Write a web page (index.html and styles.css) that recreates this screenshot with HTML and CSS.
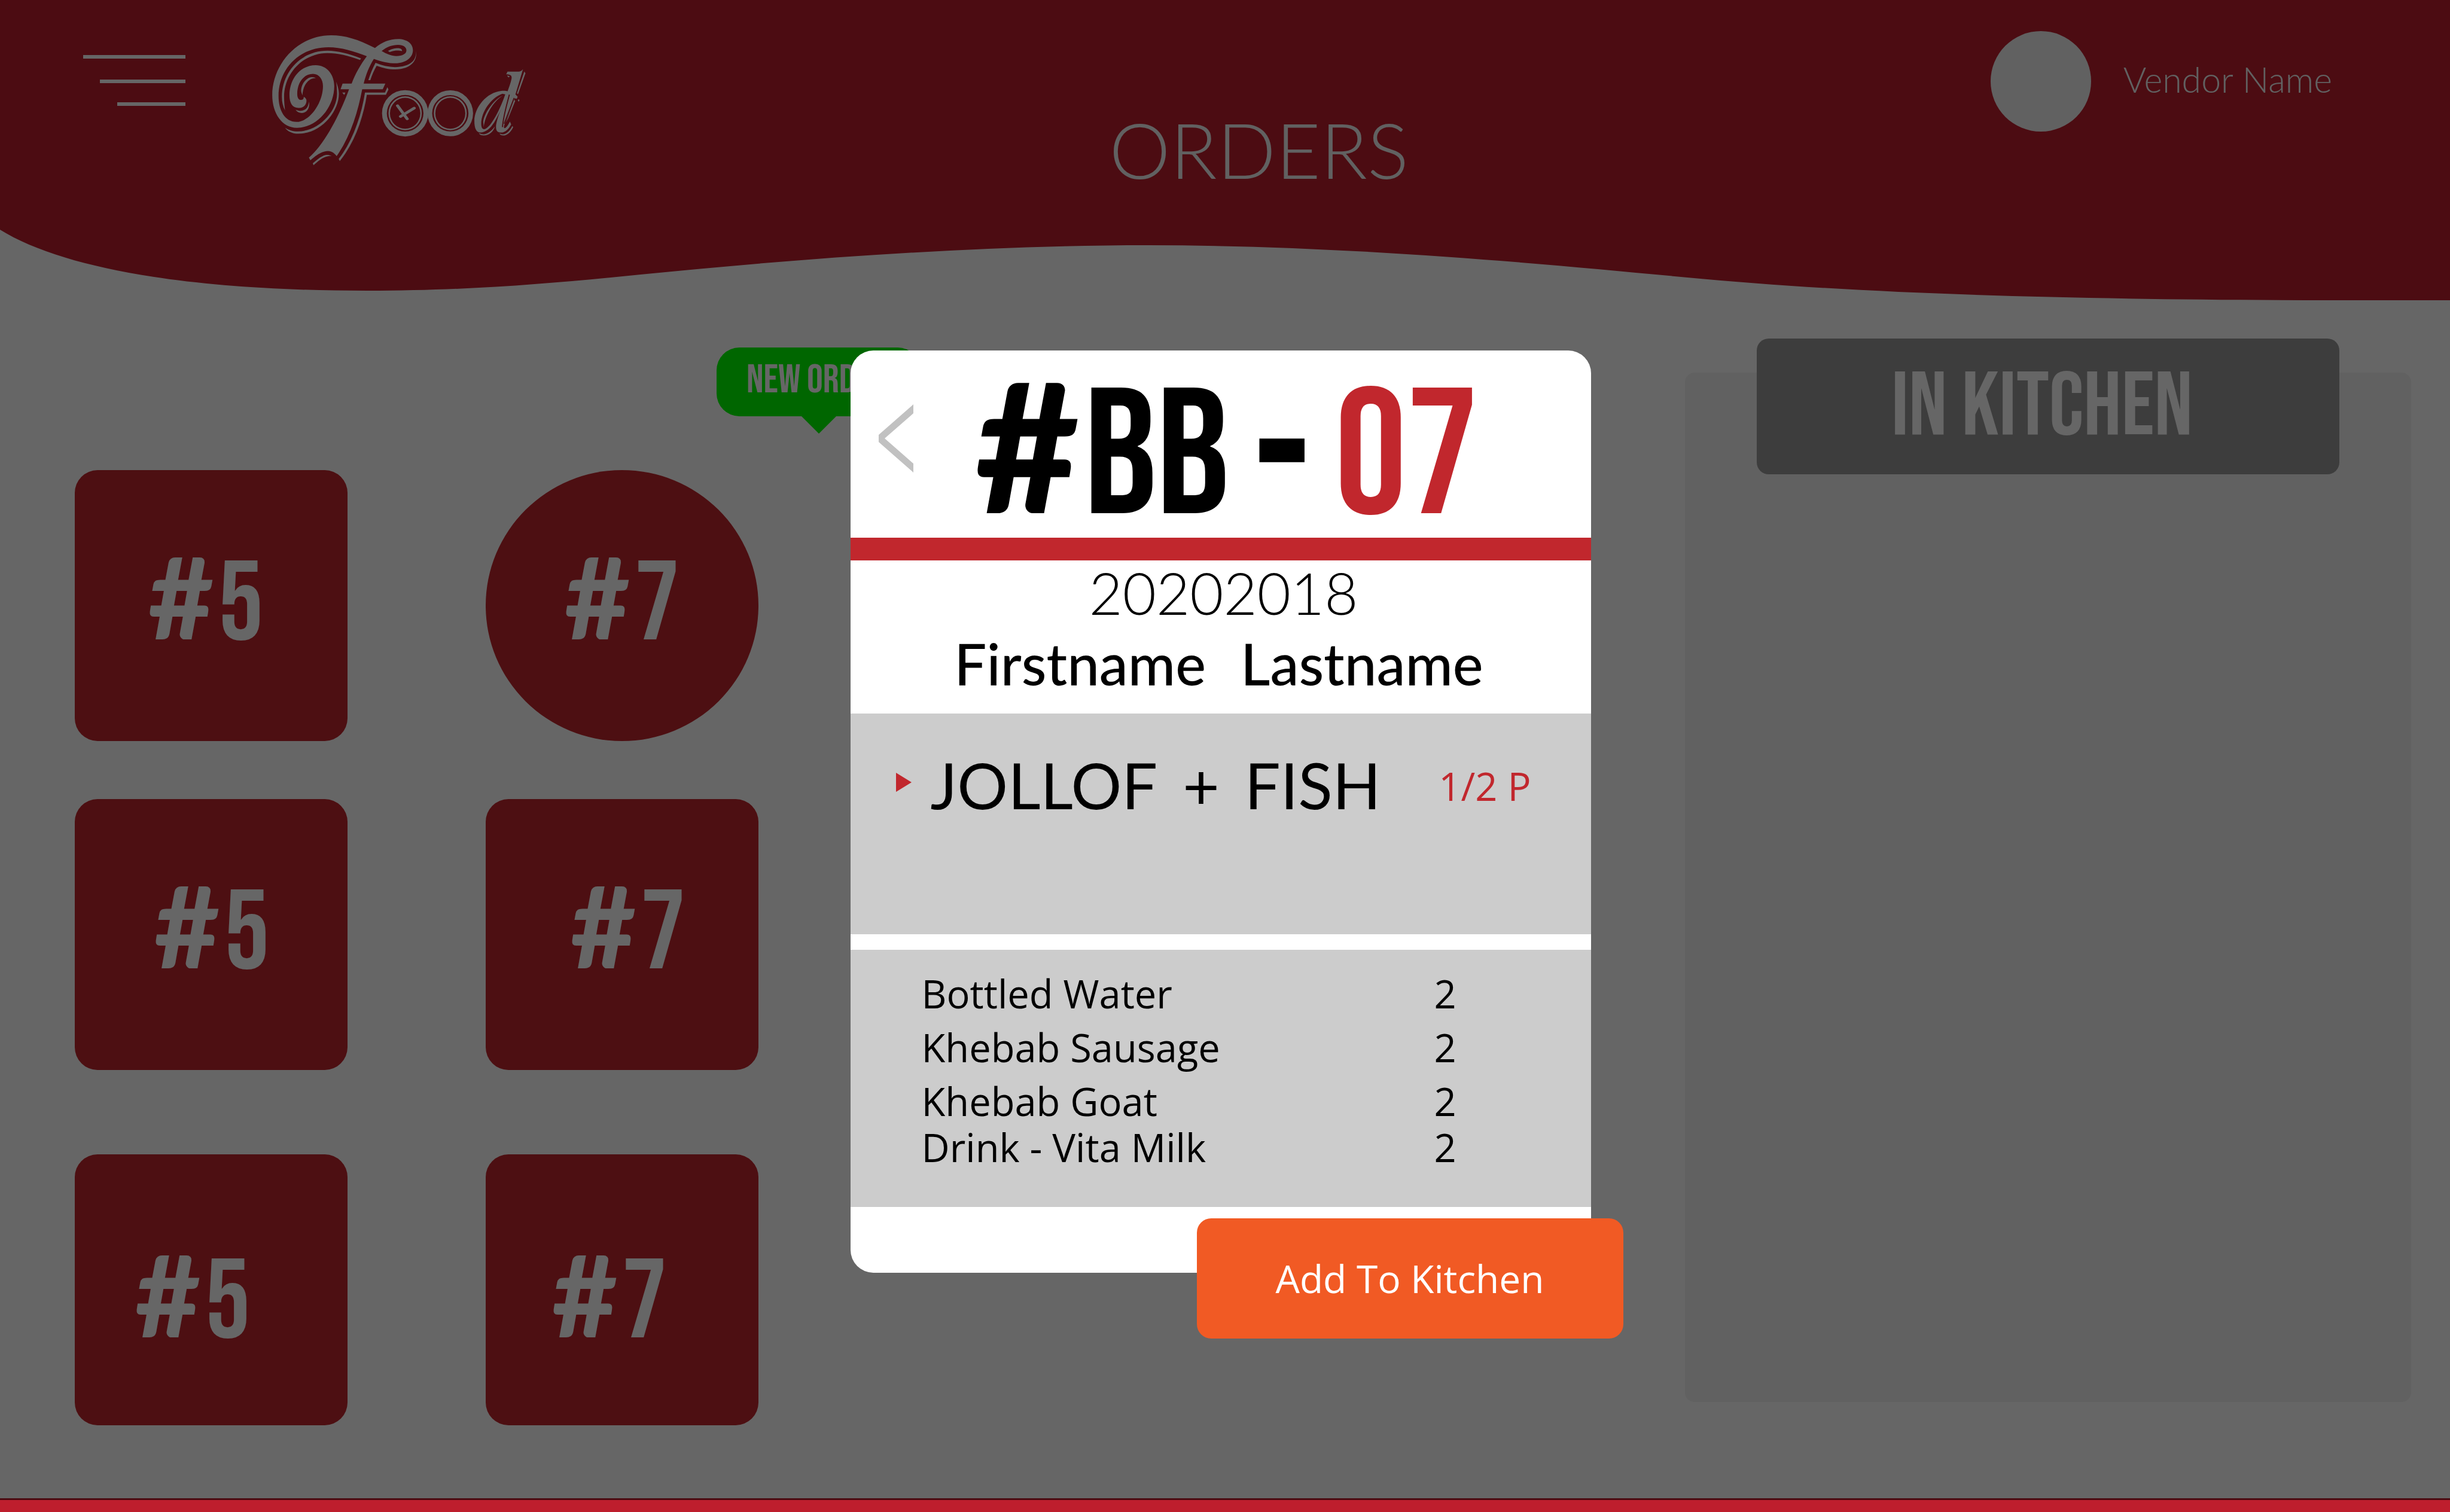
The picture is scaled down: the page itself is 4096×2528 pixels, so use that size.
FILE: index.html
```html
<!DOCTYPE html>
<html lang="en">
<head>
<meta charset="utf-8">
<meta name="viewport" content="width=device-width, initial-scale=1">
<title>Food – Orders</title>
<link rel="stylesheet" href="styles.css">
</head>
<body>
<div class="page">
  <header class="header">
    <svg class="header-wave" viewBox="0 0 4096 504" preserveAspectRatio="none" aria-hidden="true">
      <path d="M0 0H4096V502C3600 503 3180 498 2821 464C2560 439 2240 410 1920 410C1640 410 1340 432 1071 459C930 473 790 486 614 486C330 486 110 452 0 384Z"/>
    </svg>
    <div class="header-bar">
      <div class="brand">
        <button class="menu-button" type="button" aria-label="Menu">
          <svg viewBox="0 0 171 85" width="171" height="85" aria-hidden="true">
            <path d="M0 0H171V6H0ZM28 41H171V47H28ZM57 79H171V85H57Z"/>
          </svg>
        </button>
        <a class="logo" href="#" aria-label="Food">
          <svg viewBox="90 80 1380 865" width="427" height="219" preserveAspectRatio="none" aria-hidden="true">
            <g class="logo-ink">
              <path fill-rule="evenodd" d="M652 168C560 110 490 84 415 84C230 84 97 280 97 480C97 600 150 695 230 695C340 695 432 560 432 420C432 340 390 281 332 281C250 281 190 370 190 480C190 530 205 564 240 564C268 564 282 540 282 515C282 503 275 495 267 490C268 503 262 511 253 511C238 511 232 495 232 470C232 400 265 339 317 339C350 339 371 375 371 420C371 530 300 656 228 656C165 656 131 580 131 485C131 310 240 163 400 163C470 163 540 190 608 222C575 275 545 340 526 403L477 403L466 440L512 440C470 580 390 790 295 892L303 909C340 870 370 848 398 848C418 848 432 862 445 882C520 750 560 590 583 440L694 440L708 403L591 403C603 345 620 290 646 240C690 260 725 269 762 269C820 269 857 230 857 183C857 140 825 109 777 109C730 109 690 130 652 168ZM688 188C715 160 745 147 777 147C805 147 822 162 822 184C822 207 800 221 768 221C740 221 715 208 688 188Z"/>
              <path d="M571 247L577 237C510 205 450 186 395 186C250 186 149 330 149 490C149 525 155 555 166 580C163 550 161 520 161 490C161 335 265 201 395 201C450 201 510 218 571 247Z"/>
              <path d="M722 188C745 172 760 169 775 169C792 169 800 178 798 189C785 184 775 184 765 185C752 187 742 190 732 195Z"/>
              <path d="M872 188C880 250 840 294 760 294C725 294 690 283 655 266C640 300 627 340 616 380L627 380C636 345 648 312 661 285C695 300 725 309 762 309C850 309 884 245 872 188Z"/>
              <path d="M333 368C325 358 305 357 290 368C260 390 248 440 255 462L260 481C262 430 280 385 312 370C320 367 326 367 333 368Z"/>
              <path d="M295 522C302 560 285 597 257 597C242 597 230 590 223 576C232 581 243 584 252 583C278 580 292 560 295 522Z"/>
              <path d="M443 390C448 412 457 440 457 470C457 590 360 734 238 734C205 734 180 718 166 694C185 710 210 719 235 719C345 719 447 590 447 470C447 440 444 412 443 390Z"/>
              <path d="M475 462H492L486 478Z"/>
              <path d="M719 427L725 442L711 477L608 477C590 620 545 790 462 914L456 901C530 785 578 620 598 462L706 462Z"/>
              <path d="M418 881C400 872 385 872 370 882C350 893 335 910 316 929L320 942C345 915 365 895 385 887C398 882 408 881 418 881Z"/>
              <path fill-rule="evenodd" d="M690 599A125 153 0 0 1 940 599A125 153 0 0 1 690 599ZM716 599A99 121 0 0 0 914 599A99 121 0 0 0 716 599ZM725 599A90 112 0 0 1 905 599A90 112 0 0 1 725 599ZM733 599A82 102 0 0 0 897 599A82 102 0 0 0 733 599Z"/>
              <path fill-rule="evenodd" d="M936 599A123 152 0 0 1 1182 599A123 152 0 0 1 936 599ZM961 599A98 120 0 0 0 1157 599A98 120 0 0 0 961 599ZM970 599A89 112 0 0 1 1148 599A89 112 0 0 1 970 599ZM978 599A81 102 0 0 0 1140 599A81 102 0 0 0 978 599Z"/>
              <path class="logo-stroke" d="M774 549L826 636M864 565L790 620"/>
              <path fill-rule="evenodd" d="M1375 456C1360 450 1348 450 1335 451C1255 460 1189 560 1189 650C1189 700 1200 726 1221 726C1250 726 1275 700 1296 660C1325 600 1350 530 1370 474ZM1340 470C1280 495 1226 590 1226 668C1226 690 1231 704 1241 704C1270 704 1320 600 1356 474Z"/>
              <path d="M1342 483C1290 510 1237 610 1237 660L1240 690C1245 620 1290 520 1342 483Z"/>
              <path d="M1452 307C1443 322 1435 324 1420 324L1368 324L1361 342C1385 342 1393 352 1390 370C1385 400 1375 430 1367 460C1345 540 1306 640 1306 690C1306 715 1315 726 1333 726C1358 726 1375 700 1388 672L1381 654C1372 675 1362 697 1352 697C1346 697 1350 680 1354 666L1408 500L1418 504L1423 490L1411 474Z"/>
              <path d="M1459 323L1465 335L1425 472L1419 468Z"/>
              <path d="M1427 506L1433 512L1429 522L1424 516Z"/>
              <path d="M1366 350L1380 355L1375 362L1370 358Z"/>
              <path d="M1403 512L1410 516L1372 632L1360 660Z"/>
              <path d="M1300 685C1295 715 1270 745 1240 746C1228 746 1218 742 1213 730C1225 737 1235 739 1245 737C1270 730 1288 705 1300 685Z"/>
              <path d="M1394 683L1399 690C1385 725 1365 746 1345 746C1335 746 1328 742 1325 733C1335 738 1343 739 1350 737C1368 730 1383 710 1394 683Z"/>
            </g>
            <path class="logo-cut" d="M1378 476C1365 540 1345 620 1341 690M1404 498L1350 668"/>
          </svg>
        </a>
      </div>
      <h1 class="page-title">ORDERS</h1>
      <div class="vendor">
        <span class="avatar"></span>
        <span class="vendor-name">Vendor Name</span>
      </div>
    </div>
  </header>

  <main class="main">
    <section class="orders" aria-label="Orders">
      <div class="new-order">NEW ORDER</div>
      <div class="order-row">
        <button class="tile" type="button"><span class="hash">#</span>5</button>
        <button class="tile tile-round" type="button"><span class="hash">#</span>7</button>
      </div>
      <div class="order-row order-row-middle">
        <button class="tile" type="button"><span class="hash">#</span>5</button>
        <button class="tile" type="button"><span class="hash">#</span>7</button>
      </div>
      <div class="order-row order-row-last">
        <button class="tile" type="button"><span class="hash">#</span>5</button>
        <button class="tile" type="button"><span class="hash">#</span>7</button>
      </div>
    </section>
    <section class="kitchen" aria-labelledby="kitchen-title">
      <h2 class="kitchen-title" id="kitchen-title">IN KITCHEN</h2>
    </section>
  </main>

  <footer class="footer"></footer>
</div>

<div class="overlay">
  <div class="modal" role="dialog" aria-modal="true" aria-labelledby="order-code">
    <div class="modal-head">
      <button class="back-button" type="button" aria-label="Back">
        <svg viewBox="0 0 58 114" width="58" height="114" aria-hidden="true">
          <path d="M58 0V15L10 57L58 99V114L0 63V51Z"/>
        </svg>
      </button>
      <h2 class="order-code" id="order-code"><span><span class="hash">#</span>BB</span><span class="order-dash">-</span><span class="order-number">07</span></h2>
    </div>
    <div class="customer">
      <p class="customer-id">20202018</p>
      <p class="customer-name"><span>Firstname</span> <span>Lastname</span></p>
    </div>
    <div class="meal">
      <svg class="meal-marker" viewBox="0 0 26 32" width="26" height="32" aria-hidden="true"><path d="M0 0L26 16L0 32Z"/></svg>
      <p class="meal-name"><span>JOLLOF</span> <span>+</span> <span>FISH</span></p>
      <p class="meal-portion">1/2 P</p>
    </div>
    <div class="extras">
      <table class="extras-table">
        <tbody>
          <tr><td class="extra-name">Bottled Water</td><td>2</td></tr>
          <tr><td class="extra-name">Khebab Sausage</td><td>2</td></tr>
          <tr><td class="extra-name">Khebab Goat</td><td>2</td></tr>
          <tr><td class="extra-name">Drink - Vita Milk</td><td>2</td></tr>
        </tbody>
      </table>
    </div>
    <div class="modal-foot">
      <button class="add-button" type="button">Add To Kitchen</button>
    </div>
  </div>
</div>
</body>
</html>
```
FILE: styles.css
```css
:root {
  --display: "Bebas Neue", "Liberation Sans Narrow", "Roboto Condensed", "Open Sans Condensed", "Liberation Sans", sans-serif;
  --heading: Lato, sans-serif;
  --body: "Open Sans", "Noto Sans", sans-serif;
  --brand: #be1e2d;
  --red: #c1272d;
}

* {
  box-sizing: border-box;
}

body {
  margin: 0;
  background: #fff;
  font-family: var(--body);
  color: #000;
}

h1, h2, p {
  margin: 0;
}

button {
  border: 0;
  padding: 0;
  background: none;
  cursor: pointer;
}

svg {
  display: block;
}

.page {
  min-height: 100vh;
  display: flex;
  flex-direction: column;
}

.hash {
  margin-right: 8px;
  font-family: var(--heading);
  font-weight: 900;
  line-height: 0;
}

/* Header */

.header {
  display: grid;
  height: 504px;
}

.header-wave {
  grid-area: 1 / 1;
  width: 100%;
  height: 504px;
  fill: var(--brand);
}

.header-bar {
  grid-area: 1 / 1;
  display: grid;
  grid-template-columns: 10fr auto 9fr;
  align-items: start;
  padding: 52px 197px 0 139px;
}

.brand {
  display: flex;
  align-items: flex-start;
  gap: 143px;
}

.menu-button {
  margin-top: 40px;
  fill: #fff;
}

.logo {
  margin-top: 6px;
}

.logo-ink {
  fill: #fff;
}

.logo-stroke {
  stroke: #fff;
  stroke-width: 17;
  stroke-linecap: round;
}

.logo-cut {
  fill: none;
  stroke: var(--brand);
  stroke-width: 6;
}

.page-title {
  padding-top: 121px;
  font: 300 129px/152px var(--heading);
  color: #f2f2f2;
}

.vendor {
  display: flex;
  justify-content: flex-end;
  align-items: center;
  gap: 54px;
}

.avatar {
  width: 168px;
  height: 168px;
  border-radius: 50%;
  background: #f2f2f2;
}

.vendor-name {
  padding-bottom: 6px;
  font: 300 59px/70px var(--heading);
  color: #f2f2f2;
}

/* Orders and kitchen */

.main {
  flex: 1;
  display: grid;
  grid-template-columns: 2692fr 1214fr;
  align-items: start;
  padding: 0 65px 0 125px;
}

.orders {
  position: relative;
  padding-top: 282px;
}

.order-row {
  display: flex;
  gap: 231px;
  margin-bottom: 97px;
}

.order-row-middle {
  margin-bottom: 141px;
}

.order-row-last {
  margin-bottom: 0;
}

.tile {
  width: 456px;
  height: 453px;
  border-radius: 38px;
  background: var(--red);
  font: 400 188px/220px var(--display);
  color: #fff;
}

.tile:first-child {
  padding-right: 18px;
}

.order-row-middle .tile {
  padding-left: 20px;
}

.order-row-last .tile {
  padding: 46px 42px 0 0;
}

.order-row-last .tile:first-child {
  padding-right: 62px;
}

.tile-round {
  border-radius: 50%;
}

.new-order {
  position: absolute;
  left: 1073px;
  top: 77px;
  width: 341px;
  height: 115px;
  padding-left: 50px;
  border-radius: 38px;
  background: #0f0;
  font: 400 67px/110px var(--display);
  white-space: nowrap;
  color: #fff;
}

.new-order::after {
  content: "";
  position: absolute;
  left: 141px;
  top: 114px;
  border: 30px solid transparent;
  border-top-color: #0f0;
  border-bottom-width: 0;
}

.kitchen {
  height: 1721px;
  margin-top: 119px;
  padding: 0 120px;
  border-radius: 16px;
  background: #f2f2f2;
}

.kitchen-title {
  height: 227px;
  margin-top: -57px;
  padding-right: 20px;
  border-radius: 20px;
  background: #999;
  font: 400 151px/232px var(--display);
  text-align: center;
  color: #fff;
}

.footer {
  height: 23px;
  background: var(--brand);
}

/* Order dialog */

.overlay {
  position: fixed;
  inset: 0 0 20px;
  display: flex;
  justify-content: center;
  align-items: flex-start;
  padding: 586px 15px 0 0;
  background: rgba(0, 0, 0, 0.6);
}

.modal {
  width: 1238px;
  max-width: 100%;
  border-radius: 38px;
  background: #fff;
}

.modal-head {
  height: 351px;
  display: flex;
  align-items: center;
  padding: 0 84px 0 47px;
  border-bottom: 38px solid var(--red);
}

.back-button {
  margin-bottom: 20px;
  fill: #c1c1c1;
}

.order-code {
  flex: 1;
  display: flex;
  justify-content: center;
  align-items: baseline;
  gap: 48px;
  padding-top: 50px;
  font: 400 300px/260px var(--display);
}

.order-dash {
  font-weight: 700;
}

.order-number {
  color: var(--red);
}

.customer {
  padding-bottom: 20px;
  text-align: center;
}

.customer-id {
  padding-left: 10px;
  font: 300 97px/108px var(--heading);
}

.customer-name {
  display: flex;
  justify-content: center;
  gap: 58px;
  padding-right: 6px;
  font: 500 96px/128px var(--heading);
}

.meal {
  height: 369px;
  display: flex;
  align-items: flex-start;
  padding: 56px 100px 0 76px;
  background: #ccc;
}

.meal-marker {
  margin: 43px 32px 0 0;
  fill: var(--red);
}

.meal-name {
  display: flex;
  gap: 42px;
  font: 400 106px/126px var(--heading);
}

.meal-portion {
  margin-left: auto;
  font: 400 65px/130px var(--body);
  color: var(--red);
}

.extras {
  height: 430px;
  margin-top: 26px;
  padding: 28px 100px 0 119px;
  background: #ccc;
}

.extras-table {
  border-collapse: collapse;
  font: 400 65px/64px var(--body);
}

.extras-table td {
  height: 90px;
  padding: 0;
}

.extras-table tr:last-child td {
  height: 64px;
}

.extras-table .extra-name {
  width: 857px;
}

.modal-foot {
  position: relative;
  height: 110px;
}

.add-button {
  position: absolute;
  top: 19px;
  right: -54px;
  width: 713px;
  height: 201px;
  border-radius: 24px;
  background: #f15a24;
  font: 400 64px/80px var(--body);
  color: #fff;
}
```
